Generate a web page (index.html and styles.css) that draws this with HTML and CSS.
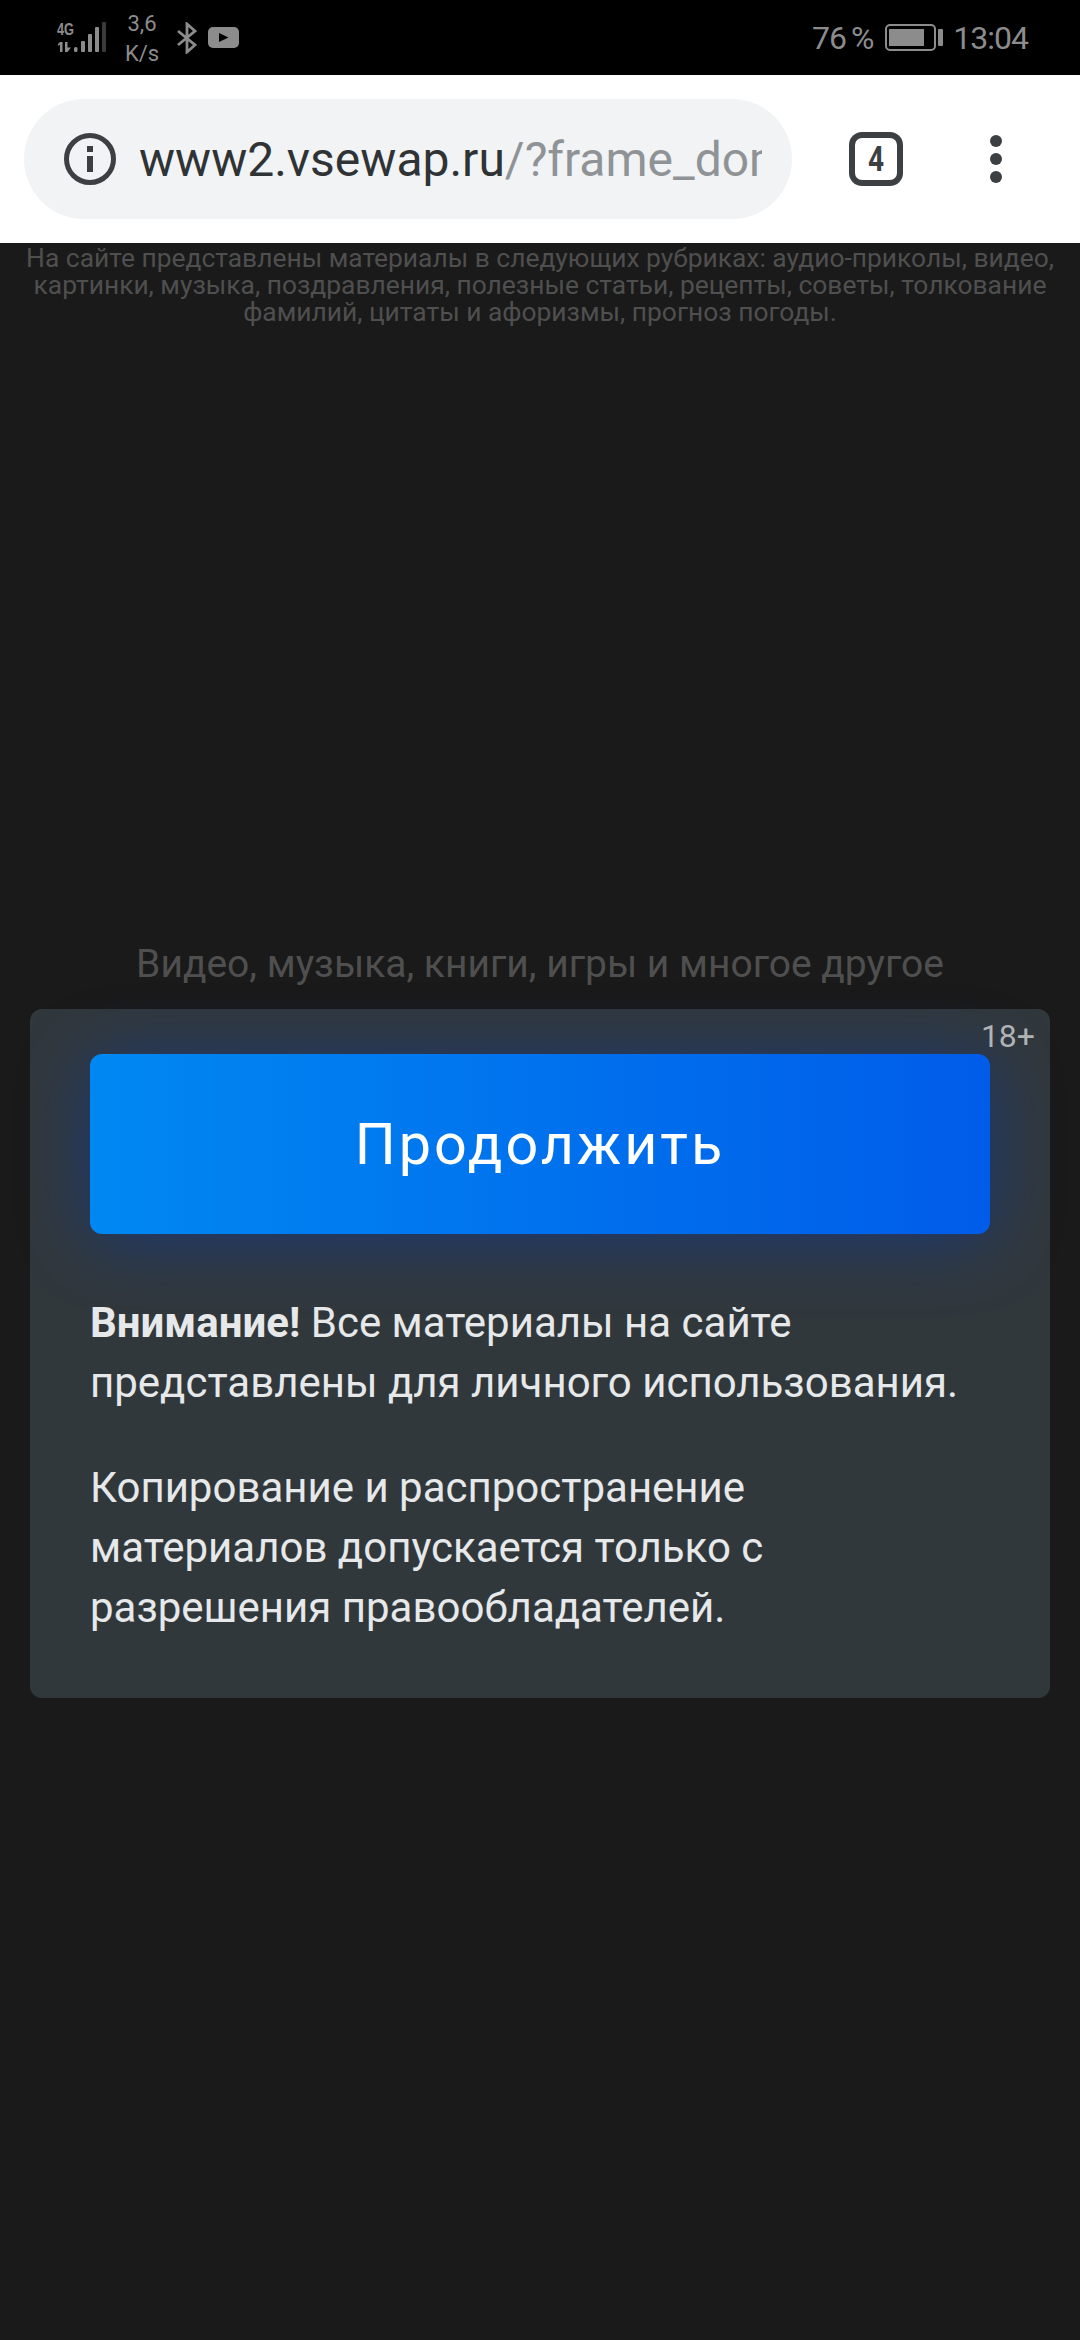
FILE: index.html
```html
<!DOCTYPE html>
<html lang="ru">

<head>
  <meta charset="UTF-8">
  <meta name="viewport" content="width=device-width, initial-scale=1.0">
  <title>vsewap</title>
  <link rel="stylesheet" href="styles.css">
</head>

<body>
  <div class="status">
    <div class="status-left">
      <svg class="net" width="50" height="32" viewBox="0 0 50 32">
        <text class="net-label" x="0" y="13" textLength="17" lengthAdjust="spacingAndGlyphs">4G</text>
        <path d="M3 20h2.500v10H3v-7.500L1 24v-2zM8 20h2.500v5.500H14L10.500 30H8z" fill="#8c8c8c" />
        <rect x="17" y="25" width="3.500" height="5" rx="1.500" fill="#8c8c8c" />
        <rect x="24" y="19" width="4" height="11" rx="1" fill="#8c8c8c" />
        <rect x="31" y="12" width="4" height="18" rx="1" fill="#8c8c8c" />
        <rect x="38" y="5" width="4" height="25" rx="1" fill="#8c8c8c" />
        <rect x="45" y="0" width="4" height="30" rx="1" fill="#3a3a3a" />
      </svg>
      <div class="speed"><span>3,6</span><span>K/s</span></div>
      <svg class="bt" width="20" height="32" viewBox="0 0 20 32">
        <path d="M1 9l17 14-8 7V2l8 7L1 23" fill="none" stroke="#8c8c8c" stroke-width="2.800" />
      </svg>
      <svg class="yt" width="31" height="21" viewBox="0 0 31 21">
        <rect width="31" height="21" rx="5" fill="#8c8c8c" />
        <path d="M11 6l9.500 4.500L11 15z" fill="#000" />
      </svg>
    </div>
    <div class="status-right">
      <span class="percent">76 %</span>
      <div class="battery"><div class="battery-level"></div></div>
      <div class="battery-tip"></div>
      <span class="clock">13:04</span>
    </div>
  </div>

  <div class="toolbar">
    <div class="omnibox">
      <svg class="info" width="52" height="52" viewBox="0 0 52 52">
        <circle cx="26" cy="26" r="23.500" fill="none" stroke="#3c4043" stroke-width="5" />
        <rect x="23" y="13" width="6" height="6" fill="#3c4043" />
        <rect x="23" y="23" width="6" height="16" fill="#3c4043" />
      </svg>
      <div class="url"><span class="host">www2.vsewap.ru</span><span class="path">/?frame_dom</span></div>
    </div>
    <div class="tabs"><span>4</span></div>
    <div class="menu"><i></i><i></i><i></i></div>
  </div>

  <div class="page">
    <p class="about">На сайте представлены материалы в следующих рубриках: аудио-приколы, видео, картинки, музыка, поздравления, полезные статьи, рецепты, советы, толкование фамилий, цитаты и афоризмы, прогноз погоды.</p>
    <p class="tagline">Видео, музыка, книги, игры и многое другое</p>
    <div class="card">
      <span class="age">18+</span>
      <button class="button">Продолжить</button>
      <p class="notice"><b>Внимание!</b> Все материалы на сайте представлены для личного использования.</p>
      <p class="notice">Копирование и распространение материалов допускается только с разрешения правообладателей.</p>
    </div>
  </div>
</body>

</html>
```

FILE: styles.css
```css
* {
  margin: 0;
  padding: 0;
  box-sizing: border-box;
}

body {
  background: #1a1a1a;
  font-family: Roboto, "Liberation Sans", sans-serif;
  min-height: 2340px;
}

/* status bar */
.status {
  height: 75px;
  background: #000;
  color: #8c8c8c;
  display: flex;
  align-items: center;
  justify-content: space-between;
  padding: 0 52px 0 57px;
}

.status-left {
  display: flex;
  align-items: center;
}

.net-label {
  font-family: "Liberation Sans", sans-serif;
  font-size: 16px;
  font-weight: 700;
  fill: #8c8c8c;
}

.speed {
  display: flex;
  flex-direction: column;
  align-items: center;
  width: 34px;
  margin-left: 18px;
  padding-top: 3px;
  font-size: 22px;
  line-height: 30px;
}

.bt {
  margin-left: 18px;
}

.yt {
  margin-left: 11px;
}

.status-right {
  display: flex;
  align-items: center;
  font-size: 32px;
}

.status-right span {
  display: inline-block;
  letter-spacing: -1px;
}

.percent {
  word-spacing: -2px;
}

.battery {
  width: 51px;
  height: 27px;
  margin-left: 12px;
  border: 2px solid #8c8c8c;
  border-radius: 5px;
  padding: 3px 2px;
}

.battery-level {
  width: 35px;
  height: 100%;
  background: #8c8c8c;
}

.battery-tip {
  width: 5px;
  height: 17px;
  margin-left: 2px;
  background: #8c8c8c;
  border-radius: 1px;
}

.clock {
  margin-left: 10px;
}

/* browser toolbar */
.toolbar {
  height: 168px;
  background: #fff;
  display: flex;
  align-items: center;
  padding-left: 24px;
}

.omnibox {
  width: 768px;
  height: 120px;
  border-radius: 60px;
  background: #f1f3f4;
  display: flex;
  align-items: center;
  padding: 0 30px 0 40px;
}

.info {
  flex: none;
}

.url {
  margin-left: 23px;
  font-size: 48px;
  white-space: nowrap;
  overflow: hidden;
}

.host {
  color: #303336;
}

.path {
  color: #8f9396;
}

.tabs {
  width: 54px;
  height: 54px;
  margin-left: 57px;
  border: 6px solid #3c4043;
  border-radius: 13px;
  color: #3c4043;
  font-size: 35px;
  font-weight: 700;
  display: flex;
  align-items: center;
  justify-content: center;
}

.tabs span {
  display: block;
  transform: scaleX(0.8);
}

.menu {
  margin-left: 87px;
  display: flex;
  flex-direction: column;
  gap: 6px;
}

.menu i {
  width: 12px;
  height: 12px;
  border-radius: 50%;
  background: #3c4043;
}

/* page */
.page {
  padding: 0 30px;
}

.about {
  margin: 0 -10px;
  padding-top: 2px;
  font-size: 26.400px;
  line-height: 27px;
  color: #4f4f4f;
  text-align: center;
}

.tagline {
  margin-top: 612.500px;
  font-size: 39px;
  line-height: 50px;
  color: #4f4f4f;
  text-align: center;
}

.card {
  position: relative;
  margin-top: 20.500px;
  height: 689px;
  padding: 45px 60px 0;
  border-radius: 12px;
  background: #31383c;
}

.age {
  position: absolute;
  top: 7px;
  right: 15px;
  font-size: 32px;
  line-height: 40px;
  color: #b0b3b5;
}

.button {
  display: block;
  width: 100%;
  height: 180px;
  margin-bottom: 59px;
  border: 0;
  border-radius: 12px;
  background: linear-gradient(90deg, #0088f2, #005ce9);
  box-shadow: 0 6px 70px rgba(0, 60, 190, 0.45);
  color: #fff;
  font-family: inherit;
  font-size: 57.500px;
  letter-spacing: 3px;
}

.notice {
  margin-bottom: 45px;
  font-size: 42px;
  line-height: 60px;
  color: #e6e8e9;
}
```
